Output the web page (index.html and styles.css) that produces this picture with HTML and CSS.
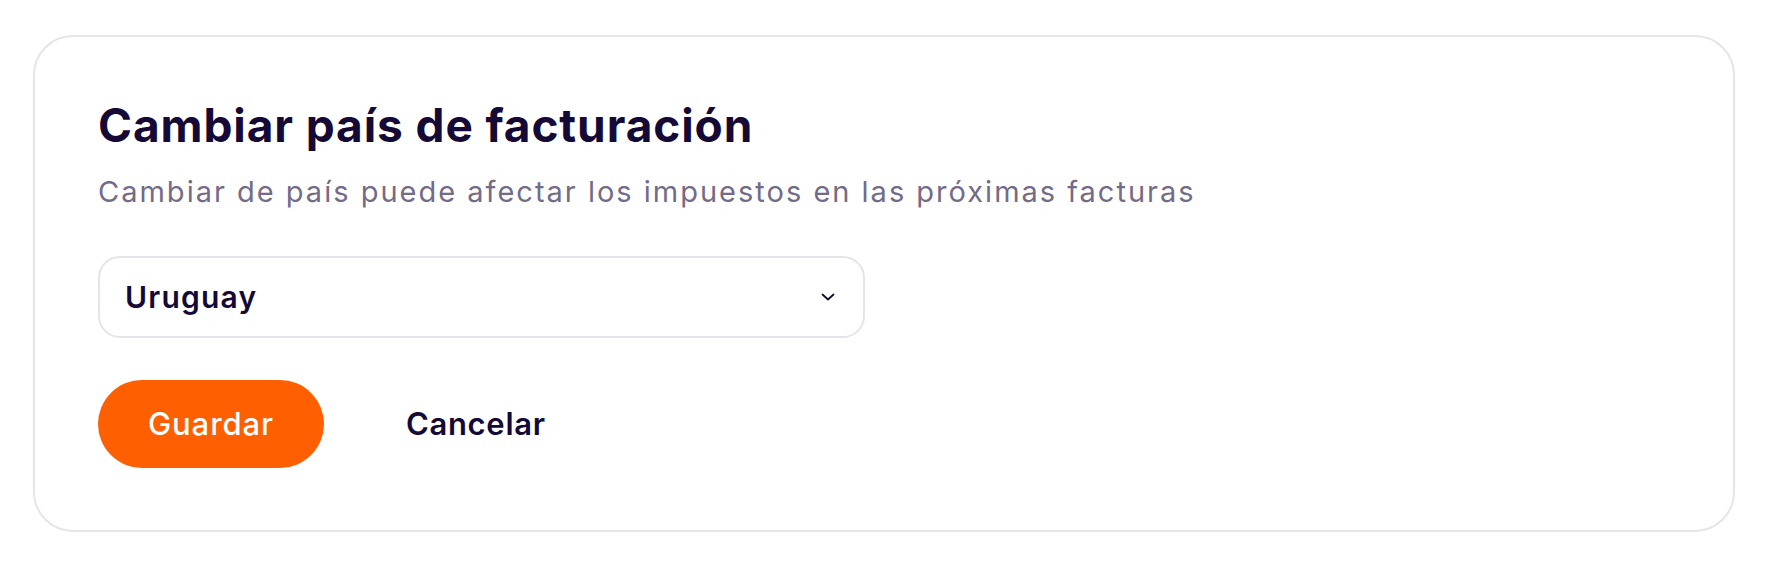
FILE: index.html
```html
<!DOCTYPE html>
<html lang="es">
<head>
  <meta charset="UTF-8">
  <meta name="viewport" content="width=device-width, initial-scale=1.0">
  <title>Cambiar país de facturación</title>
  <link rel="stylesheet" href="styles.css">
</head>
<body>
  <section class="card">
    <h1 class="card-title">Cambiar país de facturación</h1>
    <p class="card-subtitle">Cambiar de país puede afectar los impuestos en las próximas facturas</p>
    <button class="country-select" type="button">
      <span>Uruguay</span>
      <svg width="14" height="8" viewBox="0 0 14 8" fill="none">
        <path d="M1.5 1.5L7 6.5L12.5 1.5" stroke="#150a35" stroke-width="1.8" stroke-linecap="round" stroke-linejoin="round"/>
      </svg>
    </button>
    <div class="actions">
      <button class="btn btn-primary" type="button">Guardar</button>
      <button class="btn btn-link" type="button">Cancelar</button>
    </div>
  </section>
</body>
</html>
```

FILE: styles.css
```css
* {
  margin: 0;
  padding: 0;
  box-sizing: border-box;
}
body {
  font-family: 'Inter', 'Noto Sans', sans-serif;
  background-color: #fff;
  color: #150a35;
  padding: 35px 35px 0 33px;
}
.card {
  border: 2px solid #e5e4ea;
  border-radius: 40px;
  padding: 61px 63px 62px 63px;
  height: 497px;
}
.card-title {
  font-size: 46px;
  font-weight: 700;
  line-height: 1.21;
  letter-spacing: 0.9px;
  color: #150a35;
}
.card-subtitle {
  font-size: 29px;
  font-weight: 400;
  line-height: 1.21;
  color: #736b88;
  margin-top: 20px;
  letter-spacing: 2px;
}
.country-select {
  display: flex;
  align-items: center;
  justify-content: space-between;
  width: 767px;
  height: 82px;
  margin-top: 47px;
  padding: 0 25px 0 25px;
  border: 2px solid #e5e4ea;
  border-radius: 22px;
  background-color: #fff;
  font-family: inherit;
  font-size: 30px;
  font-weight: 600;
  letter-spacing: 1.2px;
  color: #150a35;
  cursor: pointer;
}
.country-select svg {
  margin-right: 3px;
}
.actions {
  display: flex;
  gap: 32px;
  margin-top: 42px;
}
.btn {
  height: 88px;
  padding: 0 50px;
  border: none;
  border-radius: 44px;
  font-family: inherit;
  font-size: 31px;
  font-weight: 500;
  letter-spacing: 0.9px;
  cursor: pointer;
}
.btn-primary {
  background-color: #fe5f00;
  color: #fff;
}
.btn-link {
  background-color: transparent;
  color: #150a35;
  font-weight: 600;
  letter-spacing: 0.7px;
}
```
